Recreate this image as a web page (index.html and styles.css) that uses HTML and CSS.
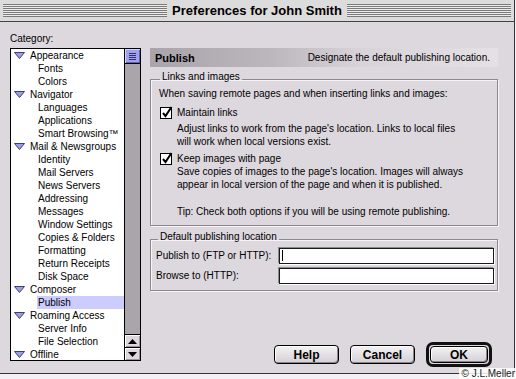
FILE: index.html
```html
<!DOCTYPE html>
<html lang="en">
<head>
    <meta charset="UTF-8">
    <meta name="viewport" content="width=device-width, initial-scale=1.0">
    <title>Preferences for John Smith</title>
    <link rel="stylesheet" href="styles.css">
</head>
<body>
    <div class="window">
        <div class="titlebar">
            <div class="stripes"></div>
            <span class="title">Preferences for John Smith</span>
            <div class="stripes"></div>
        </div>

        <div class="content">
            <div class="sidebar">
                <div class="cat-label">Category:</div>
                <div class="list">
                    <ul class="tree">
                        <li class="node"><svg class="twisty" width="11" height="7" viewBox="0 0 11 7"><polygon points="0.5,0.5 10.5,0.5 5.5,6.5" /></svg>Appearance</li>
                        <li class="leaf">Fonts</li>
                        <li class="leaf">Colors</li>
                        <li class="node"><svg class="twisty" width="11" height="7" viewBox="0 0 11 7"><polygon points="0.5,0.5 10.5,0.5 5.5,6.5" /></svg>Navigator</li>
                        <li class="leaf">Languages</li>
                        <li class="leaf">Applications</li>
                        <li class="leaf">Smart Browsing™</li>
                        <li class="node"><svg class="twisty" width="11" height="7" viewBox="0 0 11 7"><polygon points="0.5,0.5 10.5,0.5 5.5,6.5" /></svg>Mail &amp; Newsgroups</li>
                        <li class="leaf">Identity</li>
                        <li class="leaf">Mail Servers</li>
                        <li class="leaf">News Servers</li>
                        <li class="leaf">Addressing</li>
                        <li class="leaf">Messages</li>
                        <li class="leaf">Window Settings</li>
                        <li class="leaf">Copies &amp; Folders</li>
                        <li class="leaf">Formatting</li>
                        <li class="leaf">Return Receipts</li>
                        <li class="leaf">Disk Space</li>
                        <li class="node"><svg class="twisty" width="11" height="7" viewBox="0 0 11 7"><polygon points="0.5,0.5 10.5,0.5 5.5,6.5" /></svg>Composer</li>
                        <li class="leaf selected">Publish</li>
                        <li class="node"><svg class="twisty" width="11" height="7" viewBox="0 0 11 7"><polygon points="0.5,0.5 10.5,0.5 5.5,6.5" /></svg>Roaming Access</li>
                        <li class="leaf">Server Info</li>
                        <li class="leaf">File Selection</li>
                        <li class="node"><svg class="twisty" width="11" height="7" viewBox="0 0 11 7"><polygon points="0.5,0.5 10.5,0.5 5.5,6.5" /></svg>Offline</li>
                    </ul>
                    <div class="scrollbar">
                        <div class="thumb"><div class="grip"></div></div>
                        <div class="track"></div>
                        <div class="arrow"><svg width="9" height="5" viewBox="0 0 9 5"><polygon points="4.5,0 9,5 0,5" /></svg></div>
                        <div class="arrow"><svg width="9" height="5" viewBox="0 0 9 5"><polygon points="0,0 9,0 4.5,5" /></svg></div>
                    </div>
                </div>
            </div>

            <div class="panel">
                <div class="panel-head">
                    <span class="panel-title">Publish</span>
                    <span class="panel-desc">Designate the default publishing location.</span>
                </div>

                <fieldset class="group links">
                    <legend>Links and images</legend>
                    <div class="intro">When saving remote pages and when inserting links and images:</div>
                    <div class="check first">
                        <svg class="checkbox" width="14" height="13" viewBox="0 0 14 13">
                            <rect x="0.5" y="1.5" width="11" height="11" fill="#fff" stroke="#000" />
                            <path d="M3 7 L5.5 10 L11.5 1" fill="none" stroke="#000" stroke-width="2" />
                        </svg>
                        Maintain links
                    </div>
                    <div class="desc">Adjust links to work from the page's location. Links to local files<br>will work when local versions exist.</div>
                    <div class="check second">
                        <svg class="checkbox" width="14" height="13" viewBox="0 0 14 13">
                            <rect x="0.5" y="1.5" width="11" height="11" fill="#fff" stroke="#000" />
                            <path d="M3 7 L5.5 10 L11.5 1" fill="none" stroke="#000" stroke-width="2" />
                        </svg>
                        Keep images with page
                    </div>
                    <div class="desc tight">Save copies of images to the page's location. Images will always<br>appear in local version of the page and when it is published.</div>
                    <div class="tip">Tip: Check both options if you will be using remote publishing.</div>
                </fieldset>

                <fieldset class="group location">
                    <legend>Default publishing location</legend>
                    <div class="field-row">
                        <span class="field-label">Publish to (FTP or HTTP):</span>
                        <div class="field"><span class="caret"></span></div>
                    </div>
                    <div class="field-row">
                        <span class="field-label">Browse to (HTTP):</span>
                        <div class="field"></div>
                    </div>
                </fieldset>

                <div class="buttons">
                    <button class="btn">Help</button>
                    <button class="btn">Cancel</button>
                    <div class="default-ring"><button class="btn ok">OK</button></div>
                </div>
            </div>
        </div>
    </div>
    <div class="credit">© J.L.Meller</div>
</body>
</html>
```

FILE: styles.css
```css
body {
    font-family: 'Liberation Sans', Arial, sans-serif;
    font-size: 10px;
    margin: 0;
    width: 516px;
    height: 379px;
    overflow: hidden;
    background-color: #f2f0f2;
    color: #000;
    position: relative;
}

.window {
    width: 514px;
    height: 373px;
    background-color: #ddd8de;
    border-right: 1px solid #333;
    border-bottom: 1px solid #333;
    display: flex;
    flex-direction: column;
}

/* title bar */

.titlebar {
    height: 21px;
    border-bottom: 1px solid #444;
    background-color: #dcdcdc;
    display: flex;
    align-items: center;
    padding: 0 3px;
}

.stripes {
    flex: 1;
    height: 13px;
    background: repeating-linear-gradient(to bottom, #7a7a7a 0, #7a7a7a 1px, #ececec 1px, #ececec 2px);
}

.title {
    font-weight: bold;
    font-size: 13px;
    padding: 0 5px;
    line-height: 21px;
}

/* body */

.content {
    flex: 1;
    display: flex;
    gap: 9px;
    padding: 10px 16px 0 10px;
}

.sidebar {
    width: 131px;
}

.cat-label {
    line-height: 14px;
    margin-bottom: 2px;
}

.list {
    height: 313px;
    box-sizing: border-box;
    border: 1px solid #000;
    background-color: #fff;
    display: flex;
    overflow: hidden;
}

.tree {
    flex: 1;
    list-style: none;
    margin: 0;
    padding: 0;
}

.tree li {
    height: 13px;
    line-height: 13px;
    white-space: nowrap;
}

.node {
    display: flex;
    align-items: center;
    padding-left: 3px;
}

.twisty {
    margin-right: 5px;
}

.twisty polygon {
    fill: #9e9ee6;
    stroke: #3c3c78;
    stroke-width: 1;
}

.leaf {
    margin-left: 26px;
    padding-left: 1px;
}

.leaf.selected {
    background-color: #ccccff;
}

.scrollbar {
    width: 15px;
    border-left: 1px solid #000;
    display: flex;
    flex-direction: column;
}

.thumb {
    height: 14px;
    background-color: #a0a0f0;
    border-bottom: 1px solid #000;
    display: flex;
    align-items: center;
    justify-content: center;
    box-shadow: inset 1px 1px 0 #d0d0ff, inset -1px -1px 0 #6060b0;
}

.grip {
    width: 7px;
    height: 7px;
    background: repeating-linear-gradient(to bottom, #30306a 0, #30306a 1px, transparent 1px, transparent 2px);
}

.track {
    flex: 1;
    background-color: #aaa4ab;
}

.arrow {
    height: 12px;
    border-top: 1px solid #000;
    background-color: #ddd8de;
    display: flex;
    align-items: center;
    justify-content: center;
    box-shadow: inset 1px 1px 0 #fff, inset -1px -1px 0 #9a949b;
}

/* right panel */

.panel {
    width: 348px;
    margin-top: 16px;
    display: flex;
    flex-direction: column;
}

.panel-head {
    height: 19px;
    display: flex;
    align-items: center;
    justify-content: space-between;
    padding: 0 8px 0 5px;
    background: linear-gradient(to right, #a9a3aa 0%, #bcb6bd 35%, #d8d3d9 60%, #e4e0e4 100%);
}

.panel-title {
    font-weight: bold;
    font-size: 11px;
}

.group {
    margin: 4px 0 0 0;
    padding: 0 6px 7px 7px;
    border: 1px solid #8e888f;
    box-shadow: inset 1px 1px 0 #f6f4f6, 1px 1px 0 #f6f4f6;
}

.group legend {
    padding: 0 2px;
    margin-left: 2px;
    line-height: 12px;
    padding-bottom: 4px;
}

.group div {
    line-height: 13px;
}

.intro {
    margin-left: 1px;
}

.check {
    display: flex;
    align-items: center;
    margin-left: 2px;
}

.check.first {
    margin-top: 6px;
}

.check.second {
    margin-top: 4px;
}

.checkbox {
    margin-right: 3px;
}

.desc {
    margin: 3px 0 0 19px;
}

.desc.tight {
    margin-top: 0;
}

.tip {
    margin: 14px 0 0 19px;
}

.group.location {
    margin-top: 5px;
    padding-bottom: 6px;
    padding-left: 5px;
    padding-right: 3px;
}

.field-row {
    display: flex;
    align-items: center;
    height: 17px;
}

.field-row + .field-row {
    margin-top: 3px;
}

.field-label {
    width: 123px;
}

.field {
    flex: 1;
    height: 16px;
    box-sizing: border-box;
    background-color: #fff;
    border: 1px solid #1a1a1a;
    box-shadow: -1px -1px 0 #8e888f, 1px 1px 0 #fff;
    display: flex;
    align-items: center;
    padding-left: 2px;
}

.caret {
    width: 1px;
    height: 11px;
    background-color: #000;
}

/* buttons */

.buttons {
    display: flex;
    justify-content: flex-end;
    align-items: center;
    gap: 11px;
    margin-top: 51px;
    padding-right: 6px;
}

.btn {
    font-family: 'Liberation Sans', Arial, sans-serif;
    font-weight: bold;
    font-size: 12px;
    width: 65px;
    height: 19px;
    padding: 0;
    border: 1px solid #000;
    border-radius: 4px;
    background: linear-gradient(to bottom, #f4f2f4, #d4d0d5);
    box-shadow: inset 1px 1px 0 #fff, inset -1px -1px 0 #8a848b;
    color: #000;
}

.default-ring {
    border: 3px solid #111;
    border-radius: 7px;
    padding: 1px;
    display: flex;
}

.btn.ok {
    width: 58px;
    height: 17px;
}

.credit {
    position: absolute;
    right: 0;
    bottom: 0;
    padding: 0 1px 0 3px;
    line-height: 11px;
    font-size: 10px;
    background-color: rgba(255, 255, 255, 0.85);
    color: #222;
}
```
